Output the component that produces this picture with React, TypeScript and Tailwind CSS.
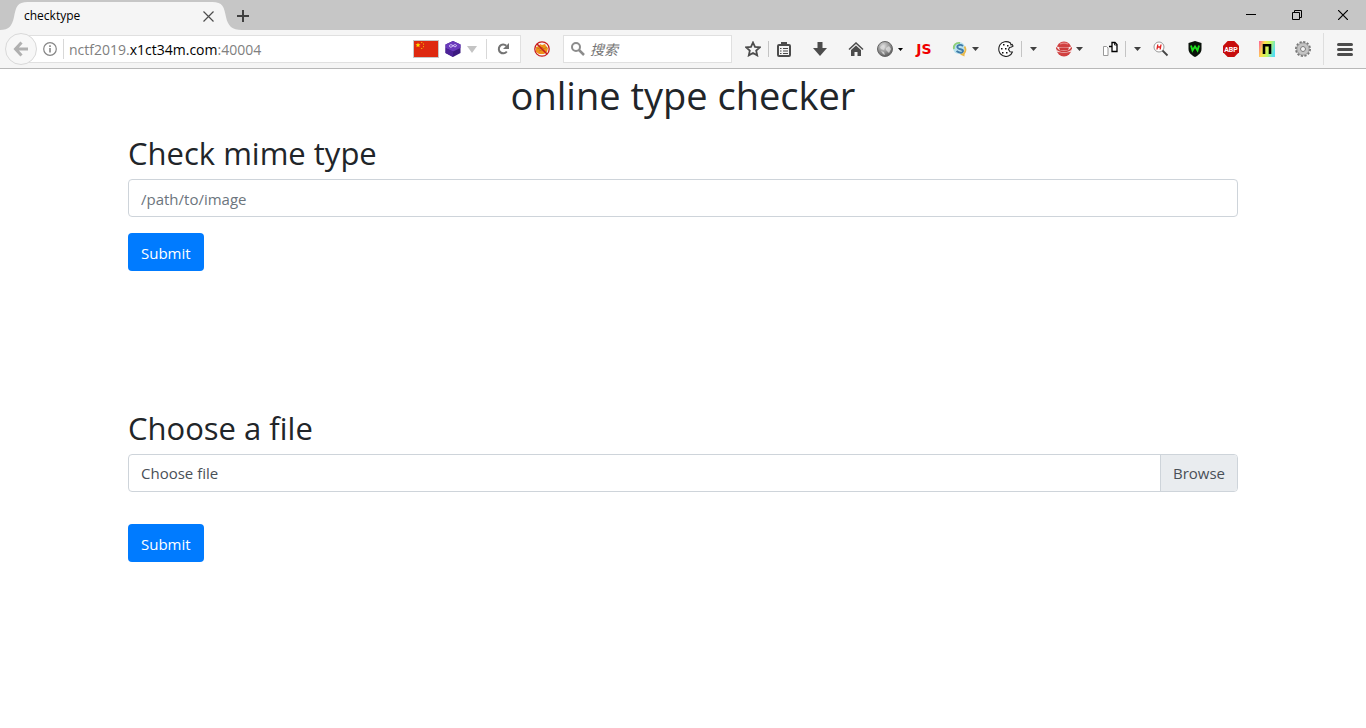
import type { ReactNode } from "react";

const FONT = "font-['Open_Sans','Noto_Sans_CJK_SC',sans-serif]";

function ToolButton({ label, className, children }: { label: string; className: string; children: ReactNode }) {
  return (
    <button type="button" aria-label={label} className={`flex h-8 shrink-0 items-center ${className}`}>
      {children}
    </button>
  );
}

function Separator() {
  return <span className="h-4 w-px shrink-0 bg-[#c4c4c4]" />;
}

function Caret() {
  return (
    <svg width="7" height="4" viewBox="0 0 7 4" className="shrink-0" fill="#404040">
      <path d="M0 0h7L3.5 4z" />
    </svg>
  );
}

function Tab() {
  return (
    <div className="relative flex h-[30px] w-[232px] items-center pt-0.5 pl-6">
      <svg className="absolute top-0 left-0" width="242" height="30" viewBox="0 0 242 30" fill="#f5f5f5">
        <path d="M0 30C9 30 12 26 14 17C16 7 17 2 28 2H212C223 2 224 7 226 17C228 26 232 30 242 30z" />
      </svg>
      <span className="relative flex-1 text-xs leading-4 text-black">checktype</span>
      <button type="button" aria-label="Close tab" className="relative mr-[18px] flex size-3 items-center justify-center">
        <svg width="11" height="11" viewBox="0 0 11 11" stroke="#4d4d4d" strokeWidth="1.2">
          <path d="M.5.5l10 10M10.5.5l-10 10" />
        </svg>
      </button>
    </div>
  );
}

function TitleBar() {
  return (
    <div className="flex h-[30px] items-center bg-[#c6c6c6]">
      <Tab />
      <button type="button" aria-label="New tab" className="ml-[5px] pt-px">
        <svg width="12" height="12" viewBox="0 0 12 12" stroke="#404040" strokeWidth="2">
          <path d="M6 0v12M0 6h12" />
        </svg>
      </button>
      <div className="ml-auto flex h-7 items-center">
        <button type="button" aria-label="Minimize" className="flex h-7 w-[46px] items-center justify-center">
          <svg width="10" height="10" viewBox="0 0 10 10" stroke="#000">
            <path d="M0 4.500h10" />
          </svg>
        </button>
        <button type="button" aria-label="Restore" className="flex h-7 w-[46px] items-center justify-center">
          <svg width="10" height="10" viewBox="0 0 10 10" fill="none" stroke="#000">
            <path d="M.5 2.500h7v7h-7zM2.500 2.500v-2h7v7h-2" />
          </svg>
        </button>
        <button type="button" aria-label="Close" className="flex h-7 w-[46px] items-center justify-center">
          <svg width="10" height="10" viewBox="0 0 10 10" stroke="#000" strokeWidth="1.2">
            <path d="M0 0l10 10M10 0L0 10" />
          </svg>
        </button>
      </div>
    </div>
  );
}

function AddressBar() {
  return (
    <div className="flex min-w-0 flex-1 items-center pl-[5px]">
      <button
        type="button"
        aria-label="Back"
        className="z-10 flex size-8 shrink-0 items-center justify-center rounded-full border border-[#d9d9d9] bg-[#f7f7f7]"
      >
        <svg width="16" height="16" viewBox="0 0 16 16" fill="none" stroke="#b0b0b0" strokeWidth="3">
          <path d="M8.500 1.500L2.500 8l6 6.500M3 8h12" />
        </svg>
      </button>
      <div className="-ml-2 flex h-7 min-w-0 flex-1 items-center border border-[#e0e0e0] bg-white pl-[13px]">
        <svg width="14" height="14" viewBox="0 0 14 14" fill="none" stroke="#858585" className="shrink-0">
          <circle cx="7" cy="7" r="6.300" strokeWidth="1.200" />
          <path d="M7 6v4.500M7 3.300v1.700" strokeWidth="1.600" />
        </svg>
        <span className="mr-[5px] ml-1.5 h-5 w-px shrink-0 bg-[#d8d8d8]" />
        <div className="flex-1 truncate pt-0.5 text-sm leading-5 text-[#808080]">
          nctf2019.<span className="text-black">x1ct34m.com</span>:40004
        </div>
        <svg width="26" height="18" viewBox="0 0 26 18" className="shrink-0">
          <path d="M0 0h26v18H0z" fill="#c8c8c8" />
          <path d="M1 1h24v16H1z" fill="#de2910" />
          <path d="M5 2.500l.7 1.700 1.800.1-1.400 1.100.5 1.800L5 6.200 3.400 7.200l.5-1.800-1.400-1.100 1.800-.1z" fill="#ffde00" />
          <path d="M8 2h1.300v1H8zM10 3.500h1v1.200h-1zM10 6h1v1.200h-1zM8 8h1.300v1H8z" fill="#f0a800" />
        </svg>
        <svg width="16" height="16" viewBox="0 0 16 16" className="ml-1.5 shrink-0">
          <path d="M8 0l7.500 3.500v8.500L8 16 .5 12V3.500z" fill="#3c1a80" />
          <path d="M8 0l7.500 3.500V7L8 10.500.5 7V3.500z" fill="#6a3abc" />
          <path d="M.5 7L8 10.500V16L.5 12z" fill="#4c2298" />
          <path d="M5 6c-1.500-1 0-3 2-2s2.500 2.500 4 1.500-.5-2.500-2-1.500S6.500 6.800 5 6" fill="none" stroke="#e2d4ff" strokeWidth=".9" />
        </svg>
        <svg width="10" height="7" viewBox="0 0 10 7" fill="#c4c4c4" className="ml-1.5 shrink-0">
          <path d="M0 0h10L5 7z" />
        </svg>
        <span className="ml-[9px] h-5 w-px shrink-0 bg-[#d8d8d8]" />
        <button type="button" aria-label="Reload" className="flex h-full w-[31px] mr-0.5 shrink-0 items-center justify-center">
          <svg width="12" height="12" viewBox="0 0 12 12">
            <path d="M9.300 2.800A4.400 4.400 0 1 0 9.800 8.500" fill="none" stroke="#737373" strokeWidth="2" />
            <path d="M12 0v6H6z" fill="#737373" />
          </svg>
        </button>
      </div>
    </div>
  );
}

function SearchBox() {
  return (
    <div className="flex h-7 w-[169px] shrink-0 items-center gap-[5px] border border-[#e0e0e0] bg-white pl-[7px]">
      <svg width="14" height="14" viewBox="0 0 14 14" fill="none" stroke="#8c8c8c" className="shrink-0">
        <circle cx="5" cy="5" r="4" strokeWidth="2" />
        <path d="M8 8l5 5" strokeWidth="2.500" />
      </svg>
      <input
        type="text"
        aria-label="搜索"
        placeholder="搜索"
        className="w-full min-w-0 bg-transparent pt-0.5 text-sm leading-5 italic outline-none placeholder:text-[#757575]"
      />
    </div>
  );
}

function Toolbar() {
  return (
    <div className="flex h-[39px] items-center border-b border-[#b8b8b8] bg-[#f5f5f5]">
      <AddressBar />
      <ToolButton label="Block content" className="w-[42px] justify-center">
        <svg width="16" height="16" viewBox="0 0 16 16">
          <path d="M2 6l3-1 1-2 2 1 3-1 1 2 2 2-1 4-3 2H5l-3-2z" fill="#f09018" />
          <path d="M3 7l3 1 2-2 2 2 3-2M5 10l3-1 3 2" fill="none" stroke="#b87a20" strokeWidth=".8" />
          <circle cx="8" cy="8" r="7.200" fill="none" stroke="#c91c1c" strokeWidth="1.300" />
          <path d="M3 3l10 10" stroke="#c91c1c" strokeWidth="1.600" />
        </svg>
      </ToolButton>
      <SearchBox />
      <ToolButton label="Bookmark" className="ml-1.5 w-[30px] justify-center">
        <svg width="16" height="16" viewBox="0 0 16 16" fill="none" stroke="#4c4c4c" strokeWidth="1.800">
          <path d="M8 1.500l2 4.400 4.800.5-3.600 3.200 1 4.800L8 12l-4.200 2.400 1-4.800L1.200 6.400 6 5.900z" />
        </svg>
      </ToolButton>
      <Separator />
      <ToolButton label="Bookmark list" className="w-[30px] justify-center">
        <svg width="14" height="15" viewBox="0 0 14 15" fill="none" stroke="#4c4c4c">
          <rect x="1" y="3" width="12" height="11" rx="1" strokeWidth="2" />
          <path d="M4 1.500h6" strokeWidth="3" />
          <path d="M3 6.500h1.500M6 6.500h5M3 9h1.500M6 9h5M3 11.500h1.500M6 11.500h5" strokeWidth="1.200" />
        </svg>
      </ToolButton>
      <ToolButton label="Downloads" className="ml-[3px] w-9 justify-center">
        <svg width="14" height="14" viewBox="0 0 14 14" fill="#4c4c4c">
          <path d="M4.500 0h5v6H14l-7 8-7-8h4.500z" />
        </svg>
      </ToolButton>
      <ToolButton label="Home" className="w-9 justify-center">
        <svg width="16" height="14" viewBox="0 0 16 14">
          <path d="M1 7.500l7-6.500 7 6.500" fill="none" stroke="#4c4c4c" strokeWidth="1.500" />
          <path d="M8 3.500L13 8v6H9.500v-4h-3v4H3V8z" fill="#4c4c4c" />
        </svg>
      </ToolButton>
      <ToolButton label="Proxy" className="w-[34px] gap-[5px] pl-[3px]">
        <svg width="16" height="16" viewBox="0 0 16 16" className="shrink-0">
          <defs>
            <radialGradient id="globe" cx=".4" cy=".3" r=".75">
              <stop offset="0" stopColor="#ddd" />
              <stop offset=".5" stopColor="#999" />
              <stop offset="1" stopColor="#555" />
            </radialGradient>
          </defs>
          <circle cx="8" cy="8" r="7.500" fill="url(#globe)" stroke="#666" />
          <path d="M3 6l3-2 2 2-1 3-3-1zM9 7l3-2 2 3-2 4-3-3zM4 10l3 1 1 3-2-1z" fill="#dcdcdc" opacity=".8" />
        </svg>
        <svg width="5" height="3" viewBox="0 0 5 3" className="shrink-0">
          <path d="M0 0h5L2.500 3z" />
        </svg>
      </ToolButton>
      <ToolButton label="JavaScript" className="w-8 justify-center">
        <span className="font-['DejaVu_Sans',sans-serif] text-sm leading-4 font-bold text-[#f00000]">JS</span>
      </ToolButton>
      <ToolButton label="Switcher" className="w-12 gap-1 pl-3">
        <svg width="16" height="16" viewBox="0 0 16 16" fill="none" className="shrink-0">
          <circle cx="7" cy="7" r="6" fill="#b9e2ee" />
          <path d="M2 8C1 4 4 1.500 8 2" stroke="#8fcf78" strokeWidth="1.800" />
          <path d="M11 5C8.500 3 4.500 4 5.500 6.500s5.500 1 5.500 3.500-4 2-6.500 0" stroke="#3f7aa8" strokeWidth="1.900" />
          <path d="M12.500 5.500c1.500 2.500 1.500 5-1 7.500" stroke="#e8b84a" strokeWidth="1.800" />
          <path d="M8 13.500l4.500-2v4z" fill="#e8b84a" />
        </svg>
        <Caret />
      </ToolButton>
      <ToolButton label="Cookies" className="w-[33px] pl-[10px]">
        <svg width="16" height="16" viewBox="0 0 16 16" className="shrink-0">
          <path
            d="M12.500 2C9 -.3 4 .2 1.800 4C-.2 8 .8 12.500 4.500 14.600c4 2 8.500.4 9.900-3.600l-2.400-.3-1.500-2.200 1-2 2-.5 1.500-1-.8-1.500-1.200.5z"
            fill="#fff"
            stroke="#222"
            strokeWidth="1.100"
          />
          <path d="M5 3h1.500v1.500H5zM9 4h1.500v1.500H9zM3 7h1.500v1.500H3zM7 7h1.500v1.500H7zM4 11h1.500v1.500H4zM8 11h1.500v1.500H8z" fill="#111" />
        </svg>
      </ToolButton>
      <Separator />
      <ToolButton label="Cookie options" className="w-[22px] justify-center">
        <Caret />
      </ToolButton>
      <ToolButton label="User agent" className="w-12 gap-1 pl-3">
        <svg width="16" height="16" viewBox="0 0 16 16" className="shrink-0">
          <circle cx="8" cy="8" r="7.500" fill="#d04040" />
          <path d="M0 5.500c3 1 13 1 16 0l-.5 5c-3 1.500-12 1.500-15 0z" fill="#f7e4e4" />
          <path d="M3 6.600h10L12 9.500H4z" fill="#cc3b3b" />
          <path d="M.3 6.500C2 12 14 12 15.700 6.500" fill="none" stroke="#cc3b3b" strokeWidth="1.300" />
          <path d="M4 3c2-1.200 6-1.200 8 0" fill="none" stroke="#e88a8a" strokeWidth="1.200" />
        </svg>
        <Caret />
      </ToolButton>
      <ToolButton label="Copy pages" className="w-[33px] pl-[10px]">
        <svg width="16" height="16" viewBox="0 0 16 16" fill="#fff" className="shrink-0">
          <path d="M1.500 5.500h3l1.500 1.500v7.500H1.500z" stroke="#999" />
          <path d="M10 1.500h3l2 2v7h-5zM7 5.500h3" stroke="#000" strokeWidth="1.300" />
          <path d="M12.500 1.500v2.500h2.500" fill="none" stroke="#000" strokeWidth=".8" />
        </svg>
      </ToolButton>
      <Separator />
      <ToolButton label="Page options" className="w-[22px] justify-center">
        <Caret />
      </ToolButton>
      <ToolButton label="Header search" className="w-[29px] pl-[5px]">
        <svg width="16" height="16" viewBox="0 0 16 16" fill="none" className="shrink-0">
          <circle cx="6" cy="6" r="5" fill="#fff" stroke="#999" />
          <path d="M4.800 3.500L4 8.500M8 3.500L7.200 8.500M4.500 6h3" stroke="#e02020" strokeWidth="1.300" />
          <path d="M9.500 9.500l5 5" stroke="#444" strokeWidth="1.800" />
        </svg>
      </ToolButton>
      <ToolButton label="Wappalyzer" className="w-9 justify-center">
        <svg width="16" height="16" viewBox="0 0 16 16" fill="none">
          <path d="M8 0l6.500 2v6c0 4-3.500 6.500-6.500 8-3-1.500-6.500-4-6.500-8V2z" fill="#0a120a" />
          <path d="M4 4.500l1.500 5L8 5.500l2.500 4 1.500-5" stroke="#1ee01e" strokeWidth="1.900" />
        </svg>
      </ToolButton>
      <ToolButton label="ABP" className="w-9 justify-center">
        <svg width="16" height="16" viewBox="0 0 16 16">
          <path d="M4.700 0h6.600L16 4.700v6.600L11.300 16H4.700L0 11.300V4.700z" fill="#c70d0d" />
          <text x="8" y="11" textAnchor="middle" fill="#fff" fontSize="7" fontWeight="700" fontFamily="Roboto, sans-serif">ABP</text>
        </svg>
      </ToolButton>
      <ToolButton label="Color tools" className="w-9 justify-center">
        <svg width="16" height="16" viewBox="0 0 16 16">
          <defs>
            <linearGradient id="rainbow" x1="0" x2="1" y1=".2" y2=".5">
              <stop offset="0" stopColor="#ff6f91" />
              <stop offset=".3" stopColor="#ffe04a" />
              <stop offset=".65" stopColor="#c0f860" />
              <stop offset="1" stopColor="#55dff0" />
            </linearGradient>
          </defs>
          <path d="M0 0h16v16H0z" fill="url(#rainbow)" />
          <path d="M5 13V4.300h6V13" fill="none" stroke="#000" strokeWidth="2.600" />
        </svg>
      </ToolButton>
      <ToolButton label="Settings" className="w-9 justify-center">
        <svg width="16" height="16" viewBox="0 0 16 16" fill="none">
          <circle cx="8" cy="8" r="7" stroke="#777" strokeWidth="2" strokeDasharray="2.200 1.460" />
          <circle cx="8" cy="8" r="4.500" stroke="#c4c4c4" strokeWidth="3.500" />
          <circle cx="8" cy="8" r="6.200" stroke="#888" strokeWidth=".8" />
          <circle cx="8" cy="8" r="2.500" fill="#f5f5f5" stroke="#777" />
        </svg>
      </ToolButton>
      <span className="ml-0.5 h-8 w-px shrink-0 bg-[#dedede]" />
      <ToolButton label="Menu" className="w-[42px] justify-center">
        <svg width="16" height="13" viewBox="0 0 16 13" stroke="#4c4c4c" strokeWidth="3" strokeLinecap="round">
          <path d="M1.500 1.500h13M1.500 6.500h13M1.500 11.500h13" />
        </svg>
      </ToolButton>
    </div>
  );
}

function SubmitButton() {
  return (
    <button type="submit" className="h-[38px] rounded bg-[#007bff] px-[13px] pt-0.5 text-[15px] leading-6 text-white">
      Submit
    </button>
  );
}

export default function App() {
  return (
    <div className={`${FONT} min-h-screen bg-white text-[#212529]`}>
      <header>
        <TitleBar />
        <Toolbar />
      </header>
      <main className="mx-auto max-w-[1140px] px-[15px]">
        <h1 className="pt-0.5 text-center text-[38px] leading-[48px]">online type checker</h1>
        <form className="pt-[15px]" onSubmit={(e) => e.preventDefault()}>
          <h2 className="mb-[7px] text-[31px] leading-[38px]">
            <label htmlFor="path">Check mime type</label>
          </h2>
          <input
            id="path"
            type="text"
            placeholder="/path/to/image"
            className="mb-4 block h-[38px] w-full rounded border border-[#ced4da] px-3 pt-0.5 text-[15px] leading-6 outline-none placeholder:text-[#6c757d]"
          />
          <SubmitButton />
        </form>
        <form className="pt-[138px]" onSubmit={(e) => e.preventDefault()}>
          <h2 className="mb-[7px] text-[31px] leading-[38px]">Choose a file</h2>
          <label
            htmlFor="file"
            className="relative mb-8 flex h-[38px] items-stretch overflow-hidden rounded border border-[#ced4da] text-[15px] leading-9 text-[#495057]"
          >
            <span className="flex-1 px-3">Choose file</span>
            <span className="border-l border-[#ced4da] bg-[#e9ecef] px-3">Browse</span>
            <input id="file" type="file" className="sr-only" />
          </label>
          <SubmitButton />
        </form>
      </main>
    </div>
  );
}
